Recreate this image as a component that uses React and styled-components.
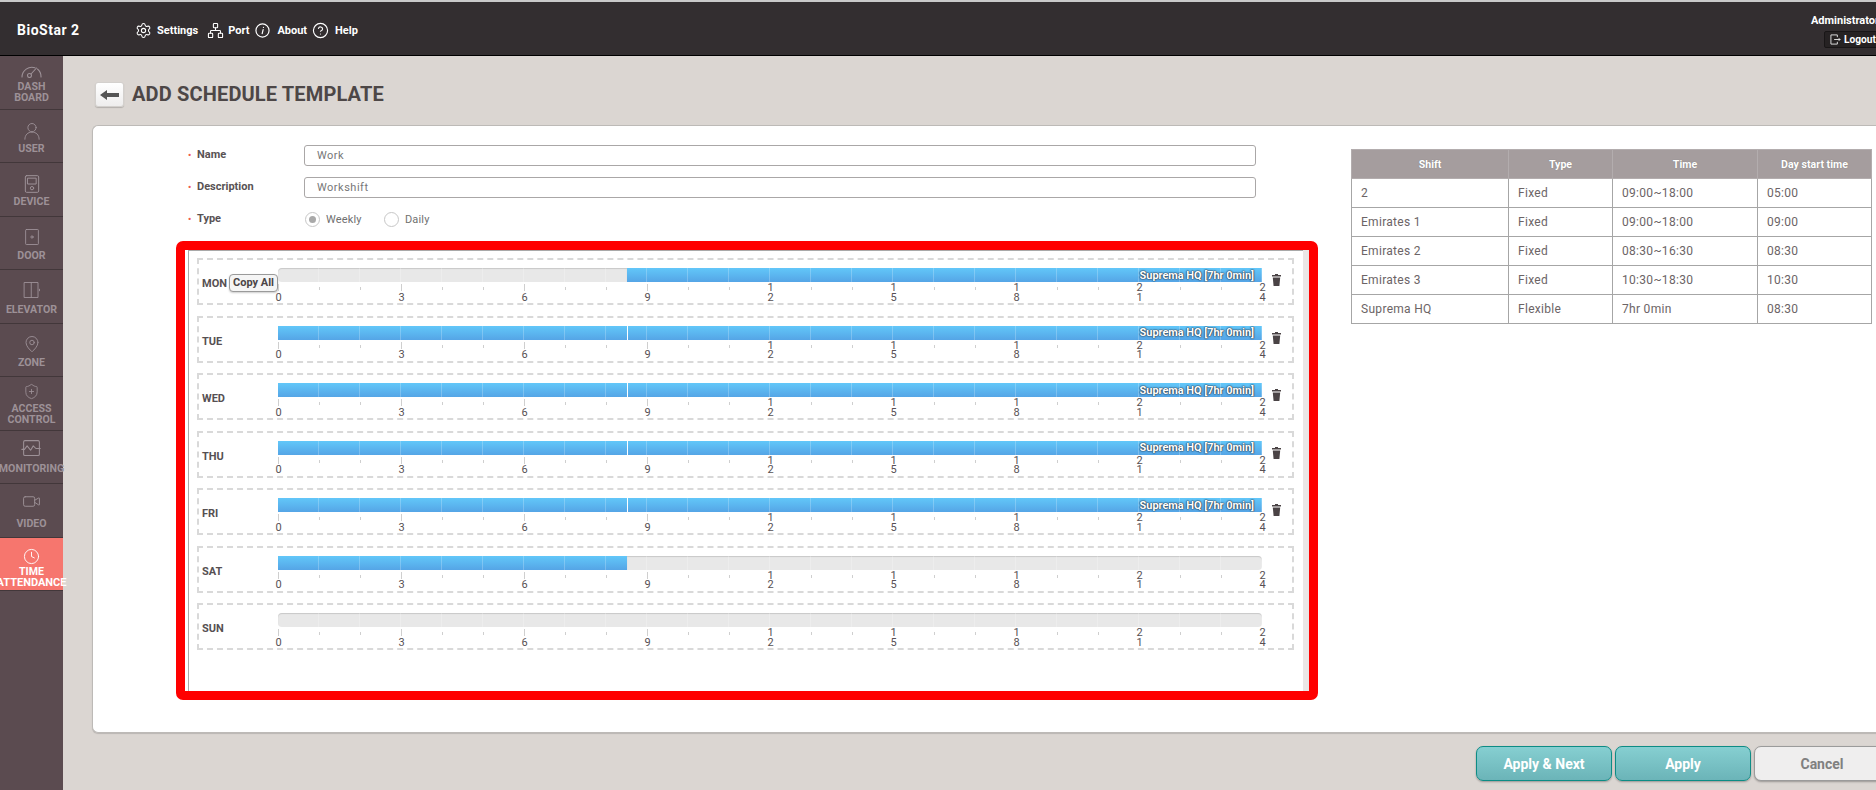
import React from "react";
import styled, { createGlobalStyle } from "styled-components";
import { Settings, Network, CircleHelp, MapPin, Video, Clock, ShieldPlus } from "lucide-react";

const Global = createGlobalStyle`
  html, body { margin: 0; padding: 0; overflow: hidden; background: #dbd6d2; }
  * { box-sizing: border-box; }
  body { font-family: Roboto, "Liberation Sans", sans-serif; }
`;

const Viewport = styled.div`width: 100vw; height: 100vh; overflow: hidden;`;
const Canvas = styled.div`width: 1895px; height: 790px; display: flex; flex-direction: column;`;

const TopBar = styled.header`
  height: 56px; flex: none; display: flex; align-items: center;
  background: #332e30; border-top: 2px solid #c9c9c9; border-bottom: 1px solid #000;
  color: #fff; padding-right: 16px;
`;
const Brand = styled.div`width: 135px; padding-left: 17px; font-size: 14px; font-weight: 700; letter-spacing: .5px; margin-top: 3px; flex: none;`;
const NavItem = styled.div`
  display: flex; align-items: center; gap: ${p => p.$gap || 7}px; margin-right: ${p => p.$mr || 8}px;
  font-size: 11px; font-weight: 700; margin-top: 3px;
`;
const UserBlock = styled.div`
  margin-left: auto; display: flex; flex-direction: column; align-items: flex-end; font-weight: 700; font-size: 11px; margin-top: 5px;
`;
const AdminName = styled.div`line-height: 14px; margin-bottom: 3px;`;
const LogoutBox = styled.div`
  display: flex; align-items: center; gap: 3px; height: 17px; width: 60px; margin-right: -5px; padding-left: 5px; font-size: 10.2px;
  background: #262223; border: 1px solid #191617; border-radius: 2px;
`;

const Body = styled.div`flex: 1; display: flex; min-height: 0;`;
const Sidebar = styled.nav`width: 63px; flex: none; background: #5b4b50; display: flex; flex-direction: column; position: relative; z-index: 1;`;
const SideItem = styled.div`
  height: 53.5px; flex: none; display: flex; flex-direction: column; align-items: center; justify-content: flex-end;
  padding-bottom: ${p => p.$pb || 9}px; gap: ${p => p.$gap || 4}px;
  border-bottom: 1px solid #42373a; white-space: nowrap;
  background: ${p => p.$active ? "#f6766e" : "transparent"};
  color: ${p => p.$active ? "#fff" : "#9d9197"};
  font-size: 10.6px; font-weight: 700; line-height: 11px; text-align: center;
`;
const SideLabel = styled.div`width: 63px; display: flex; flex-direction: column; align-items: center;`;
const WideLine = styled.span`font-size: 11px;`;

const Main = styled.main`flex: 1; padding-left: 29px; display: flex; flex-direction: column; min-width: 0;`;
const TitleRow = styled.div`height: 69px; padding: 26px 0 0 3px; display: flex; align-items: flex-start; gap: 8px;`;
const BackButton = styled.button`
  width: 29px; height: 25px; padding: 0; display: flex; align-items: center; justify-content: center;
  border: 1px solid #d3d0cd; border-radius: 3px; background: linear-gradient(#fff, #eeeded); box-shadow: 0 1px 1px rgba(0,0,0,.18);
`;
const Title = styled.h1`margin: 0; font-size: 20px; line-height: 25px; font-weight: 700; color: #4d4747; letter-spacing: .15px;`;

const Card = styled.section`
  height: 608px; flex: none; background: #fff; border: 1px solid #bdbab7; border-right: 0; border-radius: 6px 0 0 6px;
  box-shadow: 0 1px 1px rgba(0,0,0,.15); display: flex; align-items: flex-start; padding: 19px 0 0 83px;
`;
const LeftCol = styled.div`width: 1142px; flex: none;`;
const FormRow = styled.div`height: 32px; display: flex; align-items: flex-start;`;
const FormLabel = styled.label`
  width: 128px; padding-left: 12px; flex: none; font-size: 11px; font-weight: 700; line-height: 20px; color: #585254;
  position: relative;
  &::before { content: "•"; color: #ef5b4f; font-size: 9px; position: absolute; left: 12px; top: 0; }
  & > span { margin-left: 9px; }
`;
const TextInput = styled.div`
  width: 952px; height: 21px; border: 1px solid #aaa7a7; border-radius: 3px; padding-left: 12px;
  font-size: 11px; line-height: 20px; color: #777; letter-spacing: .5px; background: #fff;
`;
const RadioRow = styled.div`display: flex; align-items: center; height: 20px; font-size: 11px; color: #707070; letter-spacing: .15px;`;
const Radio = styled.span`
  width: 15px; height: 15px; border: 1px solid #c7c7c7; border-radius: 50%; display: flex; align-items: center; justify-content: center;
  margin: 0 6px 0 1px;
  &::after { content: ""; width: 7px; height: 7px; border-radius: 50%; background: ${p => p.$on ? "#a9a9a9" : "transparent"}; }
`;
const RadioText = styled.span`width: 57px;`;

const RedFrame = styled.div`
  width: 1142px; height: 459px; border: 9px solid #f00; border-radius: 7px; padding-left: 3px; background: #fff; display: flex;
`;
const SchedulePanel = styled.div`
  width: 1115px; flex: none; border-left: 1px solid #a9a9a9; border-top: 1px solid #a9a9a9; padding: 7px 0 0 8px;
  display: flex; flex-direction: column; gap: 10.5px;
`;
const PanelEdge = styled.div`width: 6px; flex: none; background: #ebe6e6;`;
const DayRow = styled.div`
  width: 1097px; height: 47px; border: 2px dashed #d9d9d9; display: flex; align-items: flex-start; flex: none;
`;
const DayCell = styled.div`width: 79px; flex: none; padding-left: 3px; display: flex; align-items: center; height: 40px; margin-top: 3px; position: relative;`;
const DayName = styled.span`font-size: 11px; font-weight: 700; color: #565052; margin-top: 1px;`;
const CopyAll = styled.button`
  position: absolute; left: 30px; top: 11px; width: 49px; height: 18px; padding: 0; font: 700 11px Roboto, sans-serif; color: #4b4547;
  border: 1px solid #9a9a9a; border-radius: 4px; background: #f5f5f5; box-shadow: 0 1px 2px rgba(0,0,0,.2); line-height: 14px;
`;
const Timeline = styled.div`width: 985px; flex: none; padding-top: 8px;`;
const Bar = styled.div`
  width: 984px; height: 14px; display: flex; position: relative; overflow: hidden;
  &::after {
    content: ""; position: absolute; inset: 0; pointer-events: none;
    background: repeating-linear-gradient(to right, transparent 0 40px, rgba(255,255,255,.22) 40px 41px);
  }
`;
const Segment = styled.div`
  width: ${p => p.$hours / 24 * 100}%; height: 14px; flex: none; display: flex; align-items: center; justify-content: flex-end;
  padding-right: 8px; white-space: nowrap;
  background: linear-gradient(#62c7f9, #55a5e6);
  color: #fff; font-size: 11px; font-weight: 700; letter-spacing: -.05px; text-shadow: 0 0 2px #28384a, 0 0 1px #28384a, 0 0 1px #28384a;
  ${p => p.$divider ? "border-left: 1px solid #fff;" : ""}
`;
const Empty = styled.div`
  width: ${p => p.$hours / 24 * 100}%; height: 14px; flex: none; background: #e8e8e8; box-shadow: inset 0 1px 1px rgba(0,0,0,.14);
  border-radius: ${p => p.$radius};
`;
const Axis = styled.div`width: 985px; height: 20px; display: flex; justify-content: space-between; margin-top: 1px;`;
const Tick = styled.div`width: 1px; height: 20px; flex: none; position: relative;`;
const TickLine = styled.div`
  width: 1px; height: ${p => p.$major ? 7 : 3}px; margin-top: ${p => p.$major ? 1 : 4}px; background: ${p => p.$hidden ? "transparent" : "#cfcfcf"};
`;
const TickLabel = styled.div`
  position: absolute; left: -5px; bottom: 1px; width: 11px; text-align: center; font-size: 11px; line-height: 9.5px; color: #575054;
`;
const Trash = styled.div`margin: 14px 0 0 9px; width: 10px; line-height: 0;`;

const ShiftTable = styled.table`
  margin: 4px 0 0 33px; width: 520px; height: 175px; border-collapse: collapse; table-layout: fixed; flex: none; font-size: 12px;
  th { background: #a59d9e; color: #fff; font-size: 10.6px; font-weight: 700; height: 29px; border: 1px solid #b3adae; text-shadow: 0 0 1px #777; padding: 0; }
  td { border: 1px solid #a6a6a6; height: 29px; padding: 0 0 0 9px; color: #6c6466; letter-spacing: .3px; }
`;

const Footer = styled.div`display: flex; justify-content: flex-end; gap: 3px; padding: 13px 5px 0 0;`;
const ActionButton = styled.button`
  width: 136px; height: 35px; padding: 0; border-radius: 7px; font: 700 14px Roboto, sans-serif; box-shadow: 0 1px 2px rgba(0,0,0,.3);
  border: 1px solid ${p => p.$plain ? "#9b9b9b" : "#0d8c85"};
  background: ${p => p.$plain ? "#efeeee" : "linear-gradient(#86cfd1, #6bb4b8)"};
  color: ${p => p.$plain ? "#808080" : "#fff"};
`;

const Ico = ({ size = 18, children, color = "currentColor", sw = 1.2 }) => (
  <svg width={size} height={size} viewBox="0 0 24 24" fill="none" stroke={color} strokeWidth={sw} strokeLinecap="round" strokeLinejoin="round">{children}</svg>
);
const DashIcon = () => (
  <svg width="21" height="12" viewBox="0 0 21 12" fill="none" stroke="currentColor" strokeWidth="1.100" strokeLinecap="round">
    <path d="M1 11A10 10 0 0 1 14 1.700M16.500 3A10 10 0 0 1 20 11" />
    <circle cx="8.500" cy="9.500" r="2" />
    <path d="M10 8 15.500 2" />
  </svg>
);
const UserIcon = () => <Ico size={18}><circle cx="12" cy="7.500" r="5.500" /><path d="M2.500 23c0-6 4-9.500 9.500-9.500s9.500 3.500 9.500 9.500" /></Ico>;
const DeviceIcon = () => <Ico size={20}><rect x="4" y="2" width="16" height="20" rx="1.500" /><rect x="7" y="5" width="10" height="7" /><circle cx="12" cy="17" r="2" /></Ico>;
const DoorIcon = () => <Ico size={18}><rect x="3.500" y="2" width="17" height="20" rx="1" /><circle cx="12" cy="12" r="1.500" /></Ico>;
const ElevIcon = () => <Ico size={18}><rect x="2" y="2" width="18" height="20" /><path d="M11 2v20" /><path d="M22 11v2" /></Ico>;
const MonitorIcon = () => <Ico size={21}><rect x="3" y="3" width="18" height="17" rx="1.500" /><path d="M1 13h3l3-4 4 5 3-5 3 3h5" /></Ico>;

const hours = Array.from({ length: 25 }, (_, i) => i);
const shiftText = "Suprema HQ [7hr 0min]";
const days = [
  { name: "MON", copy: true, parts: [["e", 8.5, "4px 0 0 4px"], ["b", 15.5, shiftText]], trash: true },
  { name: "TUE", parts: [["b", 8.5], ["d", 15.5, shiftText]], trash: true },
  { name: "WED", parts: [["b", 8.5], ["d", 15.5, shiftText]], trash: true },
  { name: "THU", parts: [["b", 8.5], ["d", 15.5, shiftText]], trash: true },
  { name: "FRI", parts: [["b", 8.5], ["d", 15.5, shiftText]], trash: true },
  { name: "SAT", parts: [["b", 8.5], ["e", 15.5, "0 4px 4px 0"]] },
  { name: "SUN", parts: [["e", 24, "4px"]] },
];
const shifts = [
  ["2", "Fixed", "09:00~18:00", "05:00"],
  ["Emirates 1", "Fixed", "09:00~18:00", "09:00"],
  ["Emirates 2", "Fixed", "08:30~16:30", "08:30"],
  ["Emirates 3", "Fixed", "10:30~18:30", "10:30"],
  ["Suprema HQ", "Flexible", "7hr 0min", "08:30"],
];

function Schedule({ day }) {
  return (
    <DayRow>
      <DayCell>
        <DayName>{day.name}</DayName>
        {day.copy && <CopyAll>Copy All</CopyAll>}
      </DayCell>
      <Timeline>
        <Bar>
          {day.parts.map(([kind, h, extra], i) =>
            kind === "e"
              ? <Empty key={i} $hours={h} $radius={extra} />
              : <Segment key={i} $hours={h} $divider={kind === "d"}>{extra}</Segment>
          )}
        </Bar>
        <Axis>
          {hours.map(h => {
            const major = h % 3 === 0;
            return (
              <Tick key={h}>
                <TickLine $major={major} $hidden={h >= 12 && major} />
                {major && <TickLabel>{String(h).split("").map((c, i) => <div key={i}>{c}</div>)}</TickLabel>}
              </Tick>
            );
          })}
        </Axis>
      </Timeline>
      {day.trash && (
        <Trash>
          <svg width="9" height="12" viewBox="0 0 9 12" fill="#4a4345">
            <rect x="0" y="1" width="9" height="1.500" />
            <rect x="3" y="0" width="3" height="1" />
            <path d="M.8 3.500h7.400l-.8 8.500H1.600z" />
          </svg>
        </Trash>
      )}
    </DayRow>
  );
}

export default function App() {
  return (
    <Viewport>
      <Global />
      <Canvas>
        <TopBar>
          <Brand>BioStar 2</Brand>
          <NavItem $gap={5} $mr={9}><Settings size={17} strokeWidth={1.5} />Settings</NavItem>
          <NavItem $gap={4} $mr={6}><Network size={17} strokeWidth={1.5} />Port</NavItem>
          <NavItem $mr={5}>
            <svg width="15" height="15" viewBox="0 0 24 24" fill="none" stroke="#fff" strokeWidth="1.900" strokeLinecap="round"><circle cx="12" cy="12" r="10.500" /><path d="M13 10.500 11.500 17M13.500 7v.2" /></svg>
            About
          </NavItem>
          <NavItem $gap={6}><CircleHelp size={17} strokeWidth={1.6} />Help</NavItem>
          <UserBlock>
            <AdminName>Administrator</AdminName>
            <LogoutBox>
              <svg width="11" height="11" viewBox="0 0 12 12" fill="none" stroke="#e8e8e8" strokeWidth="1"><path d="M8 3.500V1H1v10h7V8.500M4.500 6H11M9.500 4.500 11 6 9.500 7.500" /></svg>
              Logout
            </LogoutBox>
          </UserBlock>
        </TopBar>
        <Body>
          <Sidebar>
            <SideItem $pb={6} $gap={3}><DashIcon /><SideLabel><span>DASH</span><span>BOARD</span></SideLabel></SideItem>
            <SideItem $pb={8} $gap={3}><UserIcon /><SideLabel>USER</SideLabel></SideItem>
            <SideItem $gap={2}><DeviceIcon /><SideLabel>DEVICE</SideLabel></SideItem>
            <SideItem $pb={8} $gap={4}><DoorIcon /><SideLabel>DOOR</SideLabel></SideItem>
            <SideItem $pb={8} $gap={5}><ElevIcon /><SideLabel>ELEVATOR</SideLabel></SideItem>
            <SideItem $pb={8} $gap={4}><MapPin size={18} strokeWidth={1.2} /><SideLabel>ZONE</SideLabel></SideItem>
            <SideItem $pb={5} $gap={3}><ShieldPlus size={17} strokeWidth={1.2} /><SideLabel><span>ACCESS</span><span>CONTROL</span></SideLabel></SideItem>
            <SideItem $gap={4}><MonitorIcon /><SideLabel>MONITORING</SideLabel></SideItem>
            <SideItem $pb={8} $gap={7}><Video size={19} strokeWidth={1.2} /><SideLabel>VIDEO</SideLabel></SideItem>
            <SideItem $active $pb={2} $gap={1}><Clock size={17} strokeWidth={1.3} /><SideLabel><span>TIME</span><WideLine>ATTENDANCE</WideLine></SideLabel></SideItem>
          </Sidebar>
          <Main>
            <TitleRow>
              <BackButton aria-label="Back">
                <svg width="19" height="10" viewBox="0 0 19 10" fill="#555"><path d="M0 5 7 0v3h12v4H7v3z" /></svg>
              </BackButton>
              <Title>ADD SCHEDULE TEMPLATE</Title>
            </TitleRow>
            <Card>
              <LeftCol>
                <FormRow><FormLabel><span>Name</span></FormLabel><TextInput>Work</TextInput></FormRow>
                <FormRow><FormLabel><span>Description</span></FormLabel><TextInput>Workshift</TextInput></FormRow>
                <FormRow>
                  <FormLabel><span>Type</span></FormLabel>
                  <RadioRow><Radio $on /><RadioText>Weekly</RadioText><Radio /><span>Daily</span></RadioRow>
                </FormRow>
                <RedFrame>
                  <SchedulePanel>{days.map(d => <Schedule key={d.name} day={d} />)}</SchedulePanel>
                  <PanelEdge />
                </RedFrame>
              </LeftCol>
              <ShiftTable>
                <colgroup><col style={{ width: 157 }} /><col style={{ width: 104 }} /><col style={{ width: 145 }} /><col style={{ width: 114 }} /></colgroup>
                <thead><tr><th>Shift</th><th>Type</th><th>Time</th><th>Day start time</th></tr></thead>
                <tbody>{shifts.map(r => <tr key={r[0]}>{r.map((c, i) => <td key={i}>{c}</td>)}</tr>)}</tbody>
              </ShiftTable>
            </Card>
            <Footer>
              <ActionButton>Apply &amp; Next</ActionButton>
              <ActionButton>Apply</ActionButton>
              <ActionButton $plain>Cancel</ActionButton>
            </Footer>
          </Main>
        </Body>
      </Canvas>
    </Viewport>
  );
}
